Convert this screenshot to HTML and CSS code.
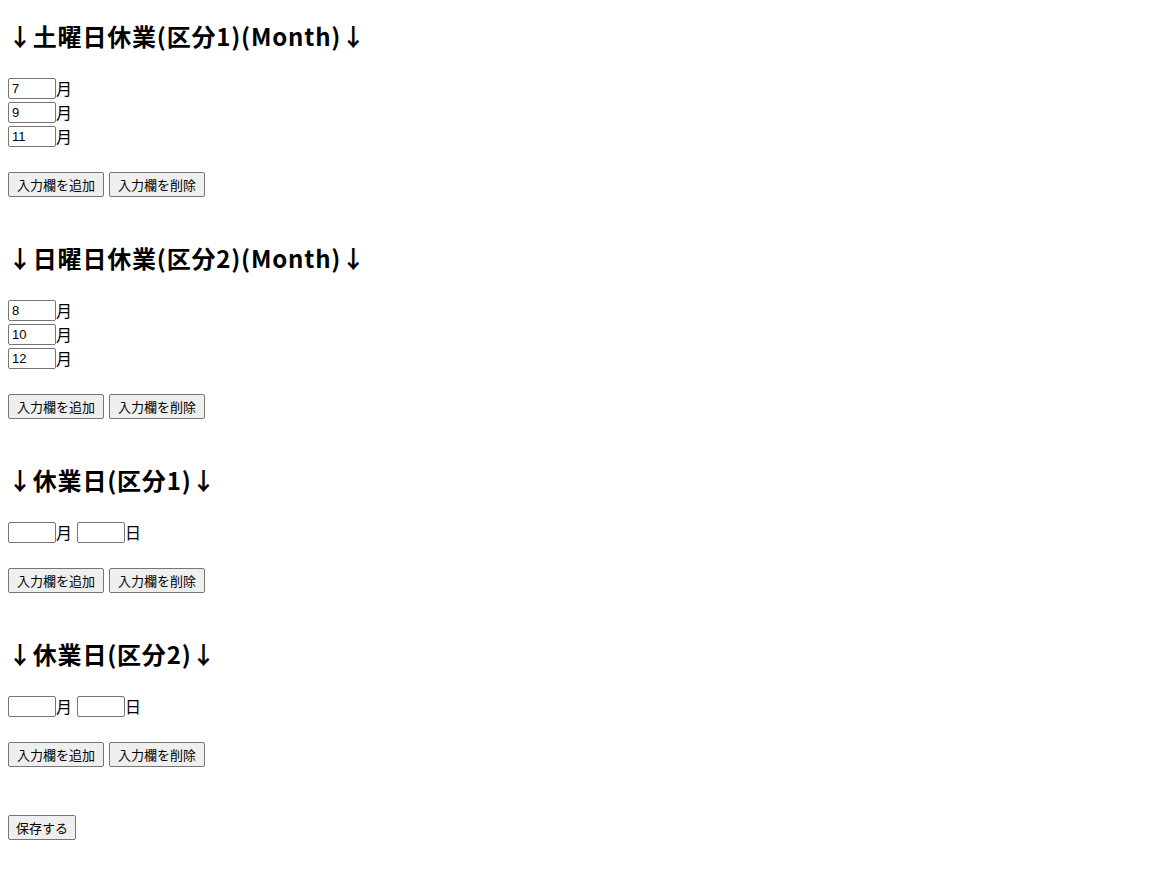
FILE: index.html
```html
<!DOCTYPE html>
<html lang="ja">
<head>
<meta charset="utf-8">
<title>休業日設定</title>
<link rel="stylesheet" href="styles.css">
</head>
<body>
<form class="page">
  <section class="block">
    <h2 class="title">↓土曜日休業(区分1)(Month)↓</h2>
    <div class="rows">
      <div class="row"><input class="num" type="text" value="7">月</div>
      <div class="row"><input class="num" type="text" value="9">月</div>
      <div class="row"><input class="num" type="text" value="11">月</div>
    </div>
    <div class="actions"><button type="button" class="btn">入力欄を追加</button> <button type="button" class="btn">入力欄を削除</button></div>
  </section>
  <section class="block">
    <h2 class="title">↓日曜日休業(区分2)(Month)↓</h2>
    <div class="rows">
      <div class="row"><input class="num" type="text" value="8">月</div>
      <div class="row"><input class="num" type="text" value="10">月</div>
      <div class="row"><input class="num" type="text" value="12">月</div>
    </div>
    <div class="actions"><button type="button" class="btn">入力欄を追加</button> <button type="button" class="btn">入力欄を削除</button></div>
  </section>
  <section class="block">
    <h2 class="title">↓休業日(区分1)↓</h2>
    <div class="rows">
      <div class="row"><input class="num" type="text">月 <input class="num" type="text">日</div>
    </div>
    <div class="actions"><button type="button" class="btn">入力欄を追加</button> <button type="button" class="btn">入力欄を削除</button></div>
  </section>
  <section class="block">
    <h2 class="title">↓休業日(区分2)↓</h2>
    <div class="rows">
      <div class="row"><input class="num" type="text">月 <input class="num" type="text">日</div>
    </div>
    <div class="actions"><button type="button" class="btn">入力欄を追加</button> <button type="button" class="btn">入力欄を削除</button></div>
  </section>
  <div class="save"><button type="submit" class="btn btn-save">保存する</button></div>
</form>
</body>
</html>
```

FILE: styles.css
```css
html, body {
  margin: 0;
  padding: 0;
  background: #ffffff;
  color: #000000;
}
body {
  padding: 8px;
  font-family: "Noto Sans CJK JP", "Noto Sans", sans-serif;
  font-size: 16px;
}
.page {
  margin: 0;
}
.block {
  padding-bottom: 33px;
}
.title {
  margin: 12px 0 0;
  font-size: 24px;
  font-weight: bold;
  line-height: 32px;
  height: 32px;
  letter-spacing: 0.8px;
}
.rows {
  margin-top: 26px;
}
.row {
  height: 24px;
  line-height: 20px;
  display: flex;
  align-items: flex-start;
}
.num {
  box-sizing: border-box;
  width: 48px;
  height: 21px;
  margin: 0;
  padding: 1px 3px;
  font-family: "Liberation Sans", Arial, sans-serif;
  font-size: 13px;
  color: #000;
  border: 1px solid #767676;
  border-radius: 2px;
  background: #fff;
}
.row .num + .num {
  margin-left: 5px;
}
.actions {
  margin-top: 22px;
  display: flex;
  gap: 5px;
}
.btn {
  box-sizing: border-box;
  height: 25px;
  margin: 0;
  padding: 0 8px;
  font-family: "Noto Sans CJK JP", sans-serif;
  font-size: 13px;
  color: #000;
  background: #efefef;
  border: 1px solid #767676;
  border-radius: 2px;
}
.btn-save {
  padding: 0 7px;
}
.save {
  margin-top: 14px;
}
```
